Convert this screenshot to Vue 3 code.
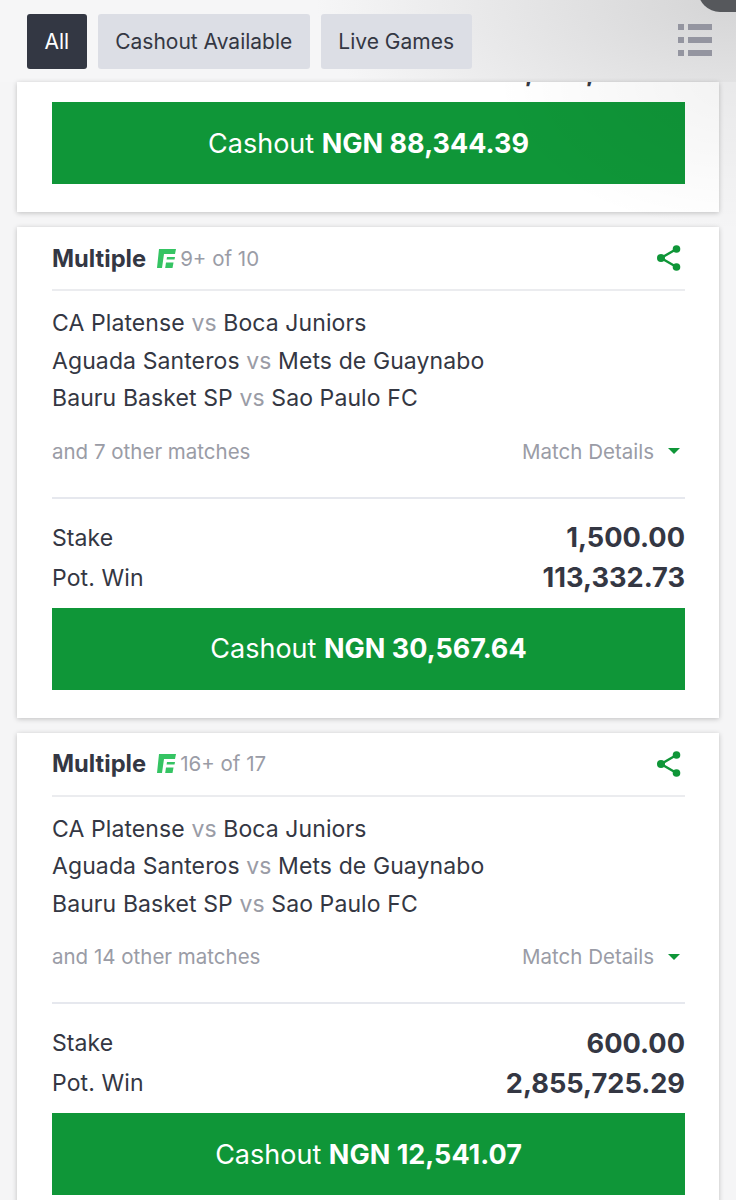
<script setup>
const bets = [
  { id: 1, system: '9+ of 10', more: 'and 7 other matches', stake: '1,500.00', win: '113,332.73', cashout: '30,567.64' },
  { id: 2, system: '16+ of 17', more: 'and 14 other matches', stake: '600.00', win: '2,855,725.29', cashout: '12,541.07' }
]

const games = [
  ['CA Platense', 'Boca Juniors'],
  ['Aguada Santeros', 'Mets de Guaynabo'],
  ['Bauru Basket SP', 'Sao Paulo FC']
]
</script>

<template>
  <div class="page">
    <header class="tabs">
      <button class="tab active">All</button>
      <button class="tab">Cashout Available</button>
      <button class="tab">Live Games</button>
      <svg class="list-icon" width="36" height="32" viewBox="0 0 36 32">
        <g fill="#9495a0">
          <rect x="0" y="0" width="6" height="6" />
          <rect x="10" y="0" width="24" height="6" />
          <rect x="0" y="13" width="6" height="6" />
          <rect x="10" y="13" width="24" height="6" />
          <rect x="0" y="26" width="6" height="6" />
          <rect x="10" y="26" width="24" height="6" />
        </g>
      </svg>
    </header>

    <section class="card first">
      <div class="clipped"><span>1,234,567.89</span></div>
      <button class="cashout">Cashout <b>NGN 88,344.39</b></button>
    </section>

    <section v-for="bet in bets" :key="bet.id" class="card">
      <div class="card-head">
        <strong>Multiple</strong>
        <svg class="flex-icon" width="19" height="19" viewBox="0 0 19 19">
          <path d="M2 0H19L18 5H7L5 19H0Z" fill="#35c463" />
          <path d="M10 8H18L17.5 10.5H9.6Z" fill="#35c463" />
          <path d="M9 13.5H16.5L15.5 19H8.2Z" fill="#35c463" />
        </svg>
        <span class="system">{{ bet.system }}</span>
        <svg class="share" width="24" height="26" viewBox="0 0 24 26">
          <path d="M19.5 4L4 13L19.5 22" fill="none" stroke="#0f9638" stroke-width="2.4" />
          <circle cx="19.5" cy="4" r="3.8" fill="#0f9638" />
          <circle cx="4" cy="13" r="4" fill="#0f9638" />
          <circle cx="19.5" cy="22" r="3.8" fill="#0f9638" />
        </svg>
      </div>

      <div class="games">
        <div v-for="g in games" :key="g[0]" class="game">
          {{ g[0] }} <span class="vs">vs</span> {{ g[1] }}
        </div>
      </div>

      <div class="more">
        <span>{{ bet.more }}</span>
        <span class="details">Match Details <i class="caret"></i></span>
      </div>

      <div class="amounts">
        <div class="row"><span>Stake</span><b>{{ bet.stake }}</b></div>
        <div class="row"><span>Pot. Win</span><b>{{ bet.win }}</b></div>
      </div>

      <button class="cashout">Cashout <b>NGN {{ bet.cashout }}</b></button>
    </section>

    <div class="corner-shade"></div>
    <div class="corner-blob"></div>
  </div>
</template>

<style scoped>
.page {
  position: relative;
  height: 1200px;
  overflow: hidden;
  background: #f5f5f6;
  font-family: Inter, "Liberation Sans", sans-serif;
  color: #343743;
}

.tabs {
  display: flex;
  align-items: flex-start;
  gap: 11px;
  height: 82px;
  padding: 14px 27px 0;
  box-sizing: border-box;
  background: radial-gradient(420px 200px at 100% 0, #d4d4d5, #f6f6f7);
}

.tab {
  height: 55px;
  padding: 0 17.5px;
  border: none;
  border-radius: 3px;
  background: #dcdee5;
  color: #343743;
  font-family: inherit;
  font-size: 21px;
}

.tab.active {
  background: #333743;
  color: #fff;
}

.list-icon {
  margin: 10px -5px 0 auto;
}

.card {
  margin: 0 17px 15px;
  padding: 0 34px 28px 35px;
  background: #fff;
  box-shadow: 0 1px 5px rgba(0, 0, 0, 0.22);
}

.clipped {
  height: 20px;
  overflow: hidden;
  text-align: right;
  font-size: 27px;
  font-weight: 700;
  line-height: 28px;
}

.clipped span {
  display: block;
  margin-top: -24px;
}

.cashout {
  display: block;
  width: 100%;
  height: 82px;
  border: none;
  background: #0f9638;
  color: #fff;
  font-family: inherit;
  font-size: 27px;
}

.cashout b {
  font-weight: 700;
}

.card-head {
  display: flex;
  align-items: center;
  height: 64px;
  border-bottom: 2px solid #ebecef;
  box-sizing: border-box;
}

.card-head strong {
  font-size: 23.7px;
  font-weight: 700;
}

.flex-icon {
  margin: 0 4px 0 11px;
}

.system {
  color: #9a9ca6;
  font-size: 20.5px;
}

.share {
  margin: 0 4px 0 auto;
}

.games {
  padding-top: 14px;
}

.game {
  height: 37.5px;
  line-height: 37.5px;
  font-size: 23px;
  letter-spacing: 0.1px;
}

.vs {
  color: #9a9ca6;
}

.more {
  display: flex;
  justify-content: space-between;
  align-items: center;
  height: 81px;
  padding-bottom: 12px;
  border-bottom: 2px solid #e6e8ee;
  box-sizing: border-box;
  color: #9a9ca6;
  font-size: 20.5px;
}

.details {
  display: flex;
  align-items: center;
}

.caret {
  width: 0;
  height: 0;
  margin: 0 5px 0 14px;
  border-left: 6.5px solid transparent;
  border-right: 6.5px solid transparent;
  border-top: 6px solid #0f9638;
}

.amounts {
  padding: 19px 0 10px;
}

.row {
  display: flex;
  justify-content: space-between;
  align-items: center;
  height: 40px;
  font-size: 23px;
  letter-spacing: 0.1px;
}

.row b {
  font-size: 27.2px;
  font-weight: 700;
  letter-spacing: 0;
}

.corner-shade {
  position: absolute;
  top: 82px;
  right: 0;
  width: 240px;
  height: 150px;
  background: radial-gradient(240px 150px at 100% 0, rgba(0, 0, 0, 0.05), rgba(0, 0, 0, 0));
  pointer-events: none;
}

.corner-blob {
  position: absolute;
  top: -30px;
  right: -20px;
  width: 58px;
  height: 42px;
  border-radius: 0 0 0 22px;
  background: #56585c;
}
</style>

<style>
html, body {
  margin: 0;
  overflow: hidden;
}
</style>
